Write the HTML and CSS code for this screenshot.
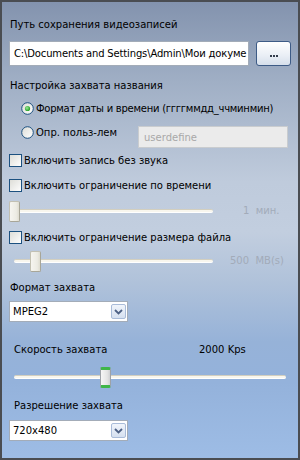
FILE: index.html
```html
<!DOCTYPE html>
<html lang="ru">
<head>
<meta charset="utf-8">
<link rel="stylesheet" href="styles.css">
</head>
<body>
<div class="panel">
  <div class="row lbl">Путь сохранения видеозаписей</div>
  <div class="row path">
    <div class="field path-field">C:\Documents and Settings\Admin\Мои докуме</div>
    <div class="btn"><span class="dot"></span><span class="dot"></span><span class="dot"></span></div>
  </div>
  <div class="row lbl l2">Настройка захвата названия</div>
  <div class="row radio r1">
    <svg class="rb" width="13" height="13" viewBox="0 0 13 13"><defs><linearGradient id="rg" x1="0" y1="0" x2="1" y2="1"><stop offset="0" stop-color="#dcdcd6"/><stop offset="1" stop-color="#ffffff"/></linearGradient><radialGradient id="gd" cx="0.4" cy="0.4" r="0.6"><stop offset="0" stop-color="#9be89b"/><stop offset="1" stop-color="#21a121"/></radialGradient></defs><circle cx="6.5" cy="6.5" r="5.8" fill="url(#rg)" stroke="#1c5180" stroke-width="1"/><circle cx="6.5" cy="6.5" r="2.6" fill="url(#gd)"/></svg>
    <span class="fmt">Формат даты и времени (ггггммдд_ччминмин)</span>
  </div>
  <div class="row radio r2">
    <span class="opt">
      <svg class="rb" width="13" height="13" viewBox="0 0 13 13"><circle cx="6.5" cy="6.5" r="5.8" fill="url(#rg)" stroke="#1c5180" stroke-width="1"/></svg>
      <span>Опр. польз-лем</span>
    </span>
    <div class="field user">userdefine</div>
  </div>
  <div class="row check c1">
    <svg class="cb" width="13" height="13" viewBox="0 0 13 13"><rect x="0.5" y="0.5" width="12" height="12" fill="url(#rg)" stroke="#1c5180"/></svg>
    <span>Включить запись без звука</span>
  </div>
  <div class="row check c2">
    <svg class="cb" width="13" height="13" viewBox="0 0 13 13"><rect x="0.5" y="0.5" width="12" height="12" fill="url(#rg)" stroke="#1c5180"/></svg>
    <span>Включить ограничение по времени</span>
  </div>
  <div class="row slider s1">
    <div class="track"><div class="thumb" style="left:-1px"></div></div>
    <span class="val">1&nbsp;&nbsp;мин.</span>
  </div>
  <div class="row check c3">
    <svg class="cb" width="13" height="13" viewBox="0 0 13 13"><rect x="0.5" y="0.5" width="12" height="12" fill="url(#rg)" stroke="#1c5180"/></svg>
    <span>Включить ограничение размера файла</span>
  </div>
  <div class="row slider s2">
    <div class="track"><div class="thumb" style="left:16px"></div></div>
    <span class="val">500&nbsp;&nbsp;MB(s)</span>
  </div>
  <div class="row lbl l3">Формат захвата</div>
  <div class="row select sel1">
    <span>MPEG2</span>
    <span class="arrow"><svg width="9" height="6" viewBox="0 0 9 6"><path d="M1 1 L4.5 4.5 L8 1" fill="none" stroke="#4d6185" stroke-width="1.8"/></svg></span>
  </div>
  <div class="row speed">
    <span class="speed-lbl">Скорость захвата</span>
    <span>2000 Kps</span>
  </div>
  <div class="row slider s3">
    <div class="track"><div class="thumb active" style="left:86px"></div></div>
  </div>
  <div class="row lbl l4">Разрешение захвата</div>
  <div class="row select sel2">
    <span>720x480</span>
    <span class="arrow"><svg width="9" height="6" viewBox="0 0 9 6"><path d="M1 1 L4.5 4.5 L8 1" fill="none" stroke="#4d6185" stroke-width="1.8"/></svg></span>
  </div>
</div>
</body>
</html>
```
FILE: styles.css
```css
html, body {
  margin: 0;
  padding: 0;
}
body {
  width: 300px;
  height: 460px;
  overflow: hidden;
  font-family: "DejaVu Sans", "Liberation Sans", sans-serif;
  font-size: 10px;
  color: #000;
}
.panel {
  box-sizing: border-box;
  width: 300px;
  height: 460px;
  border: 2px solid #4a4d52;
  padding: 14px 0 0 7px;
  display: flex;
  flex-direction: column;
  background: linear-gradient(to bottom,
    #8393ae 0px,
    #a0afc5 80px,
    #bfcbdc 180px,
    #c2cedf 230px,
    #b0c2da 280px,
    #96b2d8 340px,
    #94b2db 380px,
    #9ebde6 460px);
}
.row {
  display: flex;
  align-items: center;
  height: 16px;
  flex: none;
}
.lbl { padding-left: 1px; }
.path { margin-top: 9px; height: 25px; gap: 7px; }
.field {
  box-sizing: border-box;
  background: #fff;
  border: 1px solid #a3acb8;
  display: flex;
  align-items: center;
  overflow: hidden;
  white-space: nowrap;
}
.path-field {
  width: 240px;
  height: 25px;
  padding-left: 4px;
  font-size: 10px;
  letter-spacing: -0.15px;
}
.btn {
  box-sizing: border-box;
  width: 35px;
  height: 25px;
  border: 1px solid #3d5b86;
  border-radius: 3px;
  background: linear-gradient(to bottom, #ffffff, #e9eef5 60%, #d6dfeb);
  display: flex;
  justify-content: center;
  align-items: flex-end;
  padding-bottom: 8px;
  gap: 1px;
}
.dot {
  width: 2px;
  height: 2px;
  background: #333c4c;
}
.l2 { margin-top: 11px; }
.radio { padding-left: 12px; }
.rb, .cb { flex: none; display: block; }
.r1 { margin-top: 7px; height: 17px; gap: 2px; }
.fmt { letter-spacing: -0.25px; }
.r2 { margin-top: 6px; height: 25px; align-items: flex-start; }
.opt {
  display: flex;
  align-items: center;
  gap: 2px;
  width: 117px;
  height: 18px;
}
.user {
  width: 150px;
  height: 22px;
  margin-top: 3px;
  padding-left: 5px;
  background: #ebebeb;
  border-color: #c9cccf;
  color: #a8a8a8;
}
.check { gap: 2px; }
.c1 { margin-top: 4px; }
.c2 { margin-top: 9px; }
.c3 { margin-top: 8px; }
.slider { height: 21px; }
.track {
  position: relative;
  box-sizing: border-box;
  height: 4px;
  background: #f8f6ee;
  border-top: 1px solid #d3cfbf;
  border-bottom: 1px solid #ffffff;
  border-radius: 2px;
}
.thumb {
  position: absolute;
  top: -9px;
  box-sizing: border-box;
  width: 11px;
  height: 21px;
  border: 1px solid #c2c0b2;
  border-right-color: #a8a698;
  border-bottom-color: #a8a698;
  border-radius: 2px;
  background: linear-gradient(to right, #f6f5f0, #ecebe3 70%, #dedcd0);
}
.thumb.active {
  border: 1px solid #9ea2a8;
  border-top: 3px solid #3fb649;
  border-bottom: 3px solid #3fb649;
  background: linear-gradient(to right, #f6f6f6, #e4e4e4 70%, #cfd0d2);
}
.val { color: #a2abb9; }
.s1 { margin-top: 7px; padding-left: 1px; }
.s1 .track { width: 203px; }
.s1 .val { margin-left: 30px; }
.s2 { margin-top: 5px; padding-left: 5px; }
.s2 .track { width: 199px; }
.s2 .val { margin-left: 17px; }
.l3 { margin-top: 8px; }
.select {
  box-sizing: border-box;
  width: 119px;
  height: 21px;
  background: #fff;
  border: 1px solid #a3acb8;
  padding: 0 1px 0 3px;
  justify-content: space-between;
}
.sel1 { margin-top: 6px; }
.arrow {
  box-sizing: border-box;
  width: 15px;
  height: 15px;
  border: 1px solid #a9bcd9;
  border-radius: 2px;
  background: linear-gradient(to bottom, #f1f5fb, #d5e0f0);
  display: flex;
  align-items: center;
  justify-content: center;
}
.arrow svg { display: block; }
.speed { margin-top: 19px; padding-left: 5px; }
.speed-lbl { width: 185px; }
.s3 { margin-top: 9px; padding-left: 5px; }
.s3 .track { width: 272px; }
.l4 { margin-top: 10px; padding-left: 5px; }
.sel2 { margin-top: 7px; }
```
